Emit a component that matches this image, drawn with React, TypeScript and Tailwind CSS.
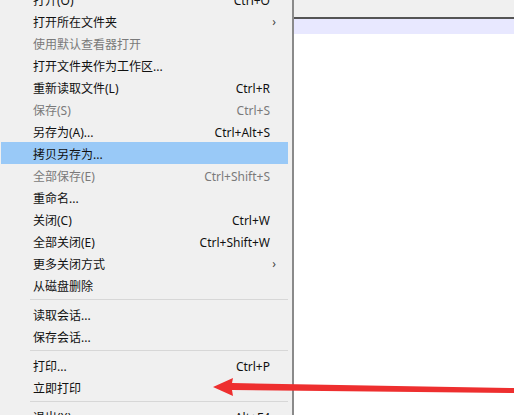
import React from 'react';

type Item =
  | { sep: true }
  | { label: string; shortcut?: string; disabled?: boolean; sub?: boolean; active?: boolean; sep?: false };

const items: Item[] = [
  { label: '打开(O)', shortcut: 'Ctrl+O' },
  { label: '打开所在文件夹', sub: true },
  { label: '使用默认查看器打开', disabled: true },
  { label: '打开文件夹作为工作区...' },
  { label: '重新读取文件(L)', shortcut: 'Ctrl+R' },
  { label: '保存(S)', shortcut: 'Ctrl+S', disabled: true },
  { label: '另存为(A)...', shortcut: 'Ctrl+Alt+S' },
  { label: '拷贝另存为...', active: true },
  { label: '全部保存(E)', shortcut: 'Ctrl+Shift+S', disabled: true },
  { label: '重命名...' },
  { label: '关闭(C)', shortcut: 'Ctrl+W' },
  { label: '全部关闭(E)', shortcut: 'Ctrl+Shift+W' },
  { label: '更多关闭方式', sub: true },
  { label: '从磁盘删除' },
  { sep: true },
  { label: '读取会话...' },
  { label: '保存会话...' },
  { sep: true },
  { label: '打印...', shortcut: 'Ctrl+P' },
  { label: '立即打印' },
  { sep: true },
  { label: '退出(X)', shortcut: 'Alt+F4' },
];

const font = { fontFamily: '"Noto Sans", "Noto Sans CJK SC", sans-serif' };

export default function App() {
  return (
    <div className="relative w-[514px] h-[415px] overflow-hidden bg-white flex items-start" style={font}>
      {/* menu */}
      <div className="w-[294px] shrink-0 bg-[#f0f0f0] border-r-2 border-[#8a8a8a] flex flex-col pl-[1px] pr-[4px] -mt-[12px] pb-[20px]">
        {items.map((it, i) =>
          it.sep ? (
            <div key={i} className="h-[7px] shrink-0 flex items-center pl-[29px]">
              <div className="h-px w-full bg-[#d7d7d7]" />
            </div>
          ) : (
            <div
              key={i}
              className={`h-[22px] shrink-0 flex items-center pl-[32px] pr-[18px] text-[12px] leading-none relative ${
                it.active ? 'bg-[#99c9f7]' : ''
              } ${it.disabled ? 'text-[#7a7a7a]' : 'text-[#111]'}`}
            >
              <span className="flex-1 pt-[3px]">{it.label}</span>
              {it.shortcut && <span className="pt-[3px]">{it.shortcut}</span>}
              {it.sub && <span className="absolute right-[12px] pt-[2px] text-[12px] text-[#444]">›</span>}
            </div>
          )
        )}
      </div>
      {/* editor area */}
      <div className="flex-1 self-stretch flex flex-col">
        <div className="h-[17px] bg-[#f0f0f0]" />
        <div className="h-[2px] bg-[#555]" />
        <div className="h-[15px] bg-[#e8e8ff]" />
        <div className="flex-1 bg-white" />
      </div>
      {/* red arrow */}
      <svg className="absolute left-0 top-0 pointer-events-none" width="514" height="415">
        <polygon points="213,387 233,378 232,383 514,388 514,393 232,390 233,396" fill="#ee2f2f" />
      </svg>
    </div>
  );
}
